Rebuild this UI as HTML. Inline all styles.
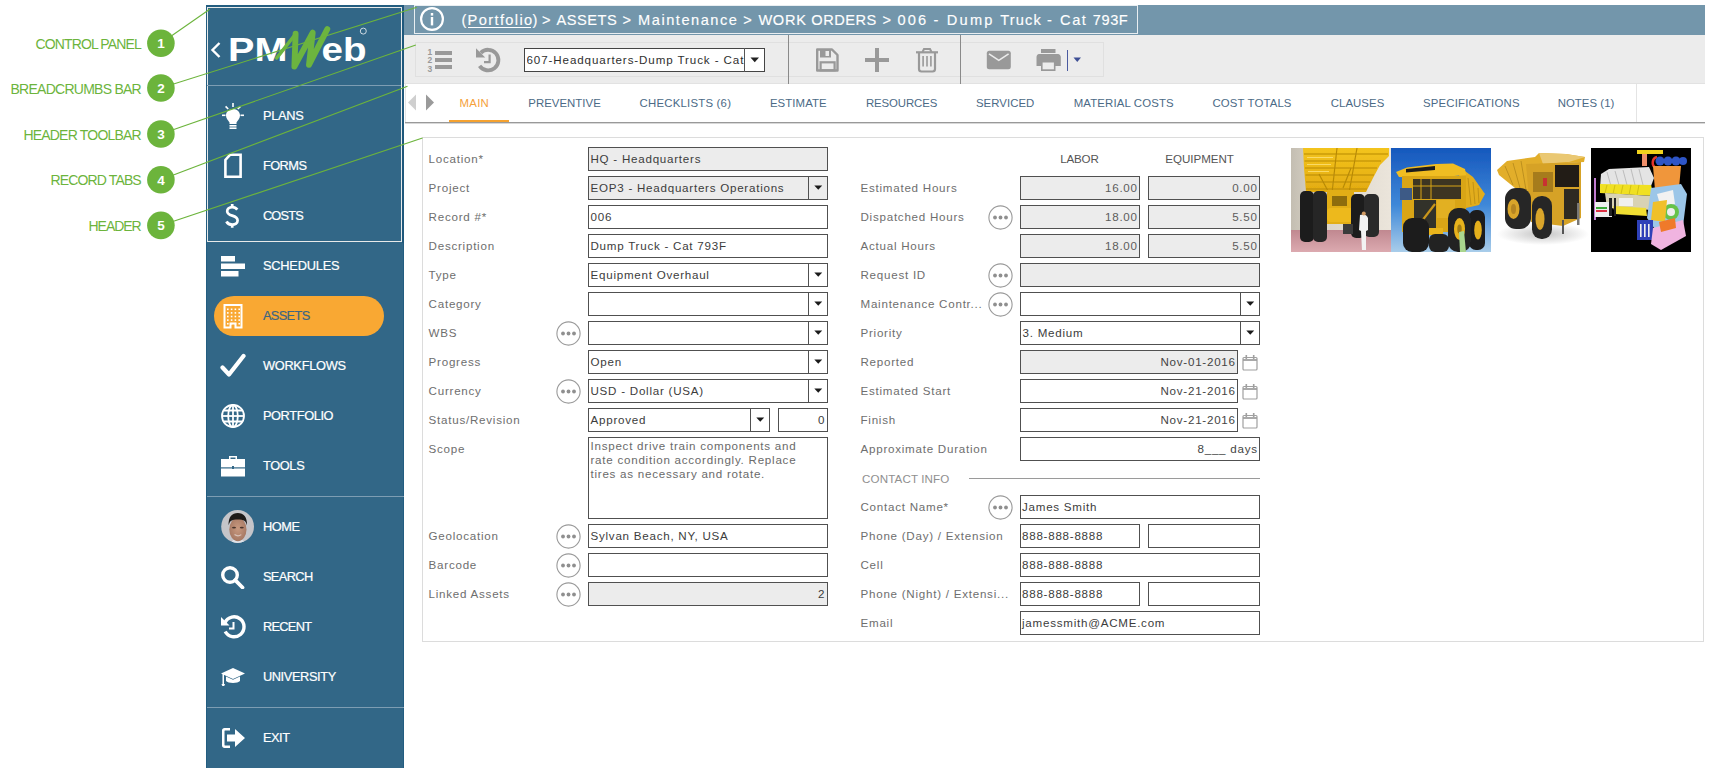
<!DOCTYPE html><html><head><meta charset="utf-8"><style>
html,body{margin:0;padding:0}
body{width:1709px;height:771px;position:relative;overflow:hidden;background:#fff;font-family:"Liberation Sans",sans-serif}
.t{position:absolute;white-space:nowrap;line-height:1}
svg{display:block}
</style></head><body>
<div style="position:absolute;left:206px;top:5px;width:198px;height:763px;background:#326787;"></div>
<div style="position:absolute;left:403px;top:5px;width:1px;height:763px;background:#235d80;"></div>
<div style="position:absolute;left:206px;top:5px;width:1px;height:763px;background:#235d80;"></div>
<div style="position:absolute;left:206px;top:5px;width:198px;height:2px;background:#235d80;"></div>
<div style="position:absolute;left:207px;top:7px;width:195px;height:235px;box-sizing:border-box;border:1px solid #e8eaea;"></div>
<div style="position:absolute;left:402px;top:5px;width:2px;height:238px;background:#1f587c;"></div>
<div style="position:absolute;left:207px;top:85px;width:194px;height:1px;background:#7d9db3;"></div>
<div style="position:absolute;left:207px;top:496px;width:197px;height:1px;background:#7d9db3;"></div>
<div style="position:absolute;left:207px;top:707px;width:197px;height:1px;background:#7d9db3;"></div>
<svg style="position:absolute;left:206px;top:25px;" width="198" height="50" viewBox="0 0 198 50">
<path d="M13.5 18 L6.5 25 L13.5 32" fill="none" stroke="#fff" stroke-width="2.4"/>
<text x="22" y="35.6" font-family="Liberation Sans" font-weight="bold" font-size="32.7" fill="#fff" textLength="59.4" lengthAdjust="spacingAndGlyphs">PM</text>
<text x="115.6" y="35.6" font-family="Liberation Sans" font-weight="bold" font-size="32.7" fill="#fff" textLength="45" lengthAdjust="spacingAndGlyphs">eb</text>
<path d="M70.7 33 L89.6 9" stroke="#6cb43f" stroke-width="3.6" stroke-linecap="round"/><polyline points="89.6,8.8 88.4,41.6 106.7,7.6 103,39.8 121.3,4.2" fill="none" stroke="#6cb43f" stroke-width="5.9" stroke-linejoin="round" stroke-linecap="round"/>
<circle cx="157.3" cy="6.1" r="3" fill="none" stroke="#dfe7ec" stroke-width="0.9"/>
</svg>
<div style="position:absolute;left:214px;top:296px;width:170px;height:40px;background:#f9a833;border-radius:20px;"></div>
<div class="t" style="left:262.90px;top:109.76px;font-size:12.8px;color:#fff;letter-spacing:-0.294px;-webkit-text-stroke:0.2px #fff;">PLANS</div>
<div class="t" style="left:262.90px;top:159.76px;font-size:12.8px;color:#fff;letter-spacing:-0.530px;-webkit-text-stroke:0.2px #fff;">FORMS</div>
<div class="t" style="left:262.90px;top:209.76px;font-size:12.8px;color:#fff;letter-spacing:-0.824px;-webkit-text-stroke:0.2px #fff;">COSTS</div>
<div class="t" style="left:262.90px;top:259.76px;font-size:12.8px;color:#fff;letter-spacing:-0.193px;-webkit-text-stroke:0.2px #fff;">SCHEDULES</div>
<div class="t" style="left:262.90px;top:309.66px;font-size:12.8px;color:#3c6583;letter-spacing:-0.641px;-webkit-text-stroke:0.2px #3c6583;">ASSETS</div>
<div class="t" style="left:262.90px;top:359.76px;font-size:12.8px;color:#fff;letter-spacing:-0.266px;-webkit-text-stroke:0.2px #fff;">WORKFLOWS</div>
<div class="t" style="left:262.90px;top:409.76px;font-size:12.8px;color:#fff;letter-spacing:-0.379px;-webkit-text-stroke:0.2px #fff;">PORTFOLIO</div>
<div class="t" style="left:262.90px;top:459.76px;font-size:12.8px;color:#fff;letter-spacing:-0.339px;-webkit-text-stroke:0.2px #fff;">TOOLS</div>
<div class="t" style="left:262.90px;top:520.76px;font-size:12.8px;color:#fff;letter-spacing:-0.400px;-webkit-text-stroke:0.2px #fff;">HOME</div>
<div class="t" style="left:262.90px;top:570.66px;font-size:12.8px;color:#fff;letter-spacing:-0.609px;-webkit-text-stroke:0.2px #fff;">SEARCH</div>
<div class="t" style="left:262.90px;top:620.66px;font-size:12.8px;color:#fff;letter-spacing:-0.685px;-webkit-text-stroke:0.2px #fff;">RECENT</div>
<div class="t" style="left:262.90px;top:670.66px;font-size:12.8px;color:#fff;letter-spacing:-0.390px;-webkit-text-stroke:0.2px #fff;">UNIVERSITY</div>
<div class="t" style="left:262.90px;top:731.66px;font-size:12.8px;color:#fff;letter-spacing:-0.450px;-webkit-text-stroke:0.2px #fff;">EXIT</div>
<svg style="position:absolute;left:220px;top:102px;" width="26" height="28" viewBox="0 0 26 28"><g fill="#fff"><path d="M13 7 C8.5 7 6 10.2 6 13.5 C6 16.5 8 18 9.5 20.5 L9.5 22 L16.5 22 L16.5 20.5 C18 18 20 16.5 20 13.5 C20 10.2 17.5 7 13 7Z"/>
<rect x="9.5" y="23" width="7" height="1.6"/><rect x="9.5" y="25.4" width="7" height="1.6"/>
<rect x="12.2" y="1" width="1.6" height="4"/><rect x="2" y="12.5" width="3.5" height="1.6"/><rect x="20.5" y="12.5" width="3.5" height="1.6"/>
<path d="M5 5 L6.2 3.8 L8.8 6.4 L7.6 7.6Z"/><path d="M21 5 L19.8 3.8 L17.2 6.4 L18.4 7.6Z"/></g></svg>
<svg style="position:absolute;left:222px;top:152px;" width="22" height="28" viewBox="0 0 22 28"><path d="M8 2.8 L18.6 2.8 L18.6 24.8 L3.4 24.8 L3.4 8 Z" fill="none" stroke="#fff" stroke-width="2.6" stroke-linejoin="miter"/></svg>
<svg style="position:absolute;left:222px;top:202px;" width="20" height="28" viewBox="0 0 20 28"><g fill="none" stroke="#fff" stroke-width="2.7"><path d="M15.3 7.6 C14 5.8 12.3 5.1 10.2 5.1 C7.2 5.1 5.2 6.9 5.2 9.2 C5.2 11.8 7.3 12.7 10.2 13.6 C13.2 14.5 15.6 15.6 15.6 18.6 C15.6 21.2 13.2 22.7 10.2 22.7 C7.6 22.7 5.5 21.6 4.4 19.5"/><path d="M10.2 2 V5.5 M10.2 22.3 V25.8"/></g></svg>
<svg style="position:absolute;left:220px;top:255px;" width="26" height="23" viewBox="0 0 26 23"><g fill="#fff"><rect x="1" y="1" width="14" height="5.5"/><rect x="1" y="8.5" width="24" height="5.5"/><rect x="1" y="16" width="17.5" height="5.5"/></g></svg>
<svg style="position:absolute;left:222px;top:303px;" width="22" height="27" viewBox="0 0 22 27"><g fill="#fff"><path d="M1.5 1 H20.5 V25.5 H12.5 V21.5 H9.5 V25.5 H1.5 Z M3.5 3 V23.5 H7.5 V19.5 H14.5 V23.5 H18.5 V3 Z"/>
<g><rect x="5.0" y="5.5" width="1.6" height="1.6"/><rect x="5.0" y="9.1" width="1.6" height="1.6"/><rect x="5.0" y="12.7" width="1.6" height="1.6"/><rect x="5.0" y="16.3" width="1.6" height="1.6"/><rect x="5.0" y="19.9" width="1.6" height="1.6"/><rect x="8.8" y="5.5" width="1.6" height="1.6"/><rect x="8.8" y="9.1" width="1.6" height="1.6"/><rect x="8.8" y="12.7" width="1.6" height="1.6"/><rect x="8.8" y="16.3" width="1.6" height="1.6"/><rect x="8.8" y="19.9" width="1.6" height="1.6"/><rect x="12.6" y="5.5" width="1.6" height="1.6"/><rect x="12.6" y="9.1" width="1.6" height="1.6"/><rect x="12.6" y="12.7" width="1.6" height="1.6"/><rect x="12.6" y="16.3" width="1.6" height="1.6"/><rect x="12.6" y="19.9" width="1.6" height="1.6"/><rect x="16.4" y="5.5" width="1.6" height="1.6"/><rect x="16.4" y="9.1" width="1.6" height="1.6"/><rect x="16.4" y="12.7" width="1.6" height="1.6"/><rect x="16.4" y="16.3" width="1.6" height="1.6"/><rect x="16.4" y="19.9" width="1.6" height="1.6"/></g></g></svg>
<svg style="position:absolute;left:220px;top:353px;" width="26" height="26" viewBox="0 0 26 26"><path d="M2.5 14.5 L9 21.5 L23.5 3" fill="none" stroke="#fff" stroke-width="4.2" stroke-linecap="round" stroke-linejoin="round"/></svg>
<svg style="position:absolute;left:220px;top:403px;" width="26" height="26" viewBox="0 0 26 26"><g fill="none" stroke="#fff" stroke-width="1.8"><circle cx="13" cy="13" r="11"/><ellipse cx="13" cy="13" rx="4.8" ry="11"/><line x1="13" y1="2" x2="13" y2="24"/><line x1="2" y1="13" x2="24" y2="13"/><path d="M4 7.5 H22 M4 18.5 H22"/></g></svg>
<svg style="position:absolute;left:220px;top:454px;" width="26" height="24" viewBox="0 0 26 24"><g fill="#fff"><path d="M9 2 H17 V5 H15.5 V3.5 H10.5 V5 H9 Z"/><rect x="1" y="5" width="24" height="8.3"/><rect x="1" y="14.5" width="24" height="8"/><rect x="12" y="12" width="2" height="3" fill="#326787"/></g></svg>
<svg style="position:absolute;left:221px;top:510px;" width="33" height="34" viewBox="0 0 33 34"><defs><clipPath id="avc"><circle cx="16.6" cy="16.5" r="16.4"/></clipPath><radialGradient id="avf" cx="50%" cy="45%" r="60%"><stop offset="0" stop-color="#c99a80"/><stop offset="1" stop-color="#a27560"/></radialGradient></defs>
<g clip-path="url(#avc)"><rect width="33" height="34" fill="#c5c5c9"/>
<path d="M10 34 C11 30 13 29 16.8 29 C20.5 29 23 30 24 34 Z" fill="#dfe3ea"/>
<ellipse cx="16.9" cy="19.5" rx="8.6" ry="11.8" fill="url(#avf)"/>
<path d="M7.6 15.5 C7.2 7 11 3 16.8 3 C22.6 3 26.4 7 26 15.5 C25 11 23 9.5 16.8 9.5 C10.6 9.5 8.6 11 7.6 15.5Z" fill="#1e1a18"/>
<g fill="#4a352c"><ellipse cx="13" cy="17.6" rx="2" ry="0.9"/><ellipse cx="20.8" cy="17.6" rx="2" ry="0.9"/></g>
<path d="M13.5 24.6 C15.5 26 18.5 26 20.3 24.6" stroke="#d9c2b8" stroke-width="1.2" fill="none"/></g></svg>
<svg style="position:absolute;left:220px;top:565px;" width="26" height="24" viewBox="0 0 26 24"><circle cx="10" cy="10" r="7.3" fill="none" stroke="#fff" stroke-width="3.4"/><path d="M15.2 15.2 L22.5 22.5" stroke="#fff" stroke-width="3.8" stroke-linecap="round"/></svg>
<svg style="position:absolute;left:220px;top:614px;" width="26" height="26" viewBox="0 0 26 26"><g fill="none" stroke="#fff" stroke-width="3.4"><path d="M5.2 17.5 A10 10 0 1 0 5 8.5"/></g><path d="M1 3 L1 11.5 L9.5 11.5 Z" fill="#fff"/><path d="M13.5 8 V14.5 H9" fill="none" stroke="#fff" stroke-width="2"/></svg>
<svg style="position:absolute;left:220px;top:667px;" width="26" height="20" viewBox="0 0 26 20"><g fill="#fff"><path d="M13 1 L25 6.5 L13 12 L1 6.5 Z"/><path d="M6 9.5 V14 C8 16.5 18 16.5 20 14 V9.5 L13 12.8 Z"/><rect x="2.5" y="7" width="1.5" height="10"/><path d="M1.5 17 L5 17 L4.2 19 L2.3 19Z"/></g></svg>
<svg style="position:absolute;left:220px;top:727px;" width="26" height="22" viewBox="0 0 26 22"><g fill="#fff"><path d="M2 3.5 C2 2 3 1 4.5 1 H10 V3.5 H5 C4.6 3.5 4.5 3.7 4.5 4 V18 C4.5 18.3 4.6 18.5 5 18.5 H10 V21 H4.5 C3 21 2 20 2 18.5 Z"/><path d="M7 7.5 H15 V2 L25 11 L15 20 V14.5 H7 Z"/></g></svg>
<div class="t" style="left:35.60px;top:37.24px;font-size:14.0px;color:#6cb43c;letter-spacing:-0.883px;">CONTROL PANEL</div>
<div class="t" style="left:10.50px;top:81.94px;font-size:14.0px;color:#6cb43c;letter-spacing:-0.741px;">BREADCRUMBS BAR</div>
<div class="t" style="left:23.40px;top:128.04px;font-size:14.0px;color:#6cb43c;letter-spacing:-0.795px;">HEADER TOOLBAR</div>
<div class="t" style="left:50.60px;top:172.84px;font-size:14.0px;color:#6cb43c;letter-spacing:-0.873px;">RECORD TABS</div>
<div class="t" style="left:88.50px;top:219.04px;font-size:14.0px;color:#6cb43c;letter-spacing:-1.029px;">HEADER</div>
<!--MAIN-->
<div style="position:absolute;left:404px;top:5px;width:1301px;height:30px;background:#7396ab;"></div>
<div style="position:absolute;left:414px;top:5px;width:724px;height:29px;box-sizing:border-box;border:1px solid #e9eef1;"></div>
<svg style="position:absolute;left:418.5px;top:6px;" width="26" height="26" viewBox="0 0 26 26"><circle cx="13" cy="13" r="10.9" fill="none" stroke="#fff" stroke-width="2.2"/><rect x="11.8" y="7" width="2.4" height="2.6" fill="#fff"/><rect x="11.8" y="11" width="2.4" height="8.4" fill="#fff"/></svg>
<div class="t" style="left:461.60px;top:12.63px;font-size:14.6px;color:#fff;letter-spacing:0.000px;-webkit-text-stroke:0.15px #fff;">(</div>
<div class="t" style="left:467.60px;top:12.63px;font-size:14.6px;color:#fff;letter-spacing:1.380px;-webkit-text-stroke:0.15px #fff;">Portfolio</div>
<div class="t" style="left:532.40px;top:12.63px;font-size:14.6px;color:#fff;letter-spacing:0.000px;-webkit-text-stroke:0.15px #fff;">)</div>
<div class="t" style="left:541.90px;top:12.63px;font-size:14.6px;color:#fff;letter-spacing:0.000px;-webkit-text-stroke:0.15px #fff;">&gt;</div>
<div class="t" style="left:556.50px;top:12.63px;font-size:14.6px;color:#fff;letter-spacing:0.518px;-webkit-text-stroke:0.15px #fff;">ASSETS</div>
<div class="t" style="left:622.50px;top:12.63px;font-size:14.6px;color:#fff;letter-spacing:0.000px;-webkit-text-stroke:0.15px #fff;">&gt;</div>
<div class="t" style="left:638.10px;top:12.63px;font-size:14.6px;color:#fff;letter-spacing:1.530px;-webkit-text-stroke:0.15px #fff;">Maintenance</div>
<div class="t" style="left:743.30px;top:12.63px;font-size:14.6px;color:#fff;letter-spacing:0.000px;-webkit-text-stroke:0.15px #fff;">&gt;</div>
<div class="t" style="left:758.40px;top:12.63px;font-size:14.6px;color:#fff;letter-spacing:0.694px;-webkit-text-stroke:0.15px #fff;">WORK</div>
<div class="t" style="left:811.30px;top:12.63px;font-size:14.6px;color:#fff;letter-spacing:0.487px;-webkit-text-stroke:0.15px #fff;">ORDERS</div>
<div class="t" style="left:882.40px;top:12.63px;font-size:14.6px;color:#fff;letter-spacing:0.000px;-webkit-text-stroke:0.15px #fff;">&gt;</div>
<div class="t" style="left:897.60px;top:12.63px;font-size:14.6px;color:#fff;letter-spacing:2.120px;-webkit-text-stroke:0.15px #fff;">006</div>
<div class="t" style="left:933.50px;top:12.63px;font-size:14.6px;color:#fff;letter-spacing:0.000px;-webkit-text-stroke:0.15px #fff;">-</div>
<div class="t" style="left:946.80px;top:12.63px;font-size:14.6px;color:#fff;letter-spacing:2.252px;-webkit-text-stroke:0.15px #fff;">Dump</div>
<div class="t" style="left:1000.30px;top:12.63px;font-size:14.6px;color:#fff;letter-spacing:1.110px;-webkit-text-stroke:0.15px #fff;">Truck</div>
<div class="t" style="left:1047.00px;top:12.63px;font-size:14.6px;color:#fff;letter-spacing:0.000px;-webkit-text-stroke:0.15px #fff;">-</div>
<div class="t" style="left:1060.00px;top:12.63px;font-size:14.6px;color:#fff;letter-spacing:1.590px;-webkit-text-stroke:0.15px #fff;">Cat</div>
<div class="t" style="left:1092.80px;top:12.63px;font-size:14.6px;color:#fff;letter-spacing:0.574px;-webkit-text-stroke:0.15px #fff;">793F</div>
<div style="position:absolute;left:468px;top:26.5px;width:63px;height:1.1000000000000014px;background:#fff;"></div>
<div style="position:absolute;left:404px;top:35px;width:1301px;height:49px;background:#ececec;"></div>
<div style="position:absolute;left:404px;top:83px;width:1301px;height:1px;background:#e2e2e2;"></div>
<div style="position:absolute;left:415px;top:42px;width:689px;height:35px;box-sizing:border-box;border:1px solid #e0e0e0;"></div>
<div style="position:absolute;left:788px;top:35px;width:1px;height:49px;background:#8a8a8a;"></div>
<div style="position:absolute;left:960px;top:35px;width:1px;height:49px;background:#8a8a8a;"></div>
<svg style="position:absolute;left:426px;top:46px;" width="28" height="28" viewBox="0 0 28 28"><g fill="#999"><rect x="9" y="5" width="17" height="4"/><rect x="9" y="12" width="17" height="4"/><rect x="9" y="19" width="17" height="4"/></g>
<g font-family="Liberation Sans" font-weight="bold" font-size="8.5" fill="#999"><text x="1.6" y="9">1</text><text x="1.6" y="17">2</text><text x="1.6" y="25.5">3</text></g></svg>
<svg style="position:absolute;left:474px;top:46px;" width="28" height="28" viewBox="0 0 28 28"><path d="M6.8 6.8 A10.3 10.3 0 1 1 5.6 19.9" fill="none" stroke="#999" stroke-width="3.8"/><path d="M2 2.3 L2 11.6 L11.2 11.6 Z" fill="#999"/><path d="M15.6 8.5 V16.1 H10" fill="none" stroke="#999" stroke-width="2.2"/></svg>
<div style="position:absolute;left:524px;top:48px;width:241px;height:24px;box-sizing:border-box;border:1px solid #444;background:#fff;"></div>
<div style="position:absolute;left:744px;top:48px;width:1px;height:24px;background:#555;"></div>
<svg style="position:absolute;left:750px;top:57px;" width="10" height="6" viewBox="0 0 10 6"><path d="M0.5 0.5 H9 L4.75 5.2 Z" fill="#222"/></svg>
<div class="t" style="left:526.50px;top:53.97px;font-size:11.6px;color:#2f2f2f;letter-spacing:0.898px;overflow:hidden;width:218px;">607-Headquarters-Dump Truck - Cat</div>
<svg style="position:absolute;left:814px;top:47px;" width="26" height="26" viewBox="0 0 26 26"><path d="M3.2 2.5 H18 L23.5 8 V23.5 H3.2 Z" fill="none" stroke="#999" stroke-width="2.4" stroke-linejoin="round"/><rect x="6" y="3" width="11" height="7.5" fill="#999"/><rect x="11.5" y="4" width="3.5" height="5" fill="#ececec"/><rect x="6.6" y="15.3" width="14" height="8" fill="none" stroke="#999" stroke-width="2.2"/></svg>
<svg style="position:absolute;left:864px;top:47px;" width="26" height="26" viewBox="0 0 26 26"><rect x="11" y="1" width="4" height="24" fill="#999"/><rect x="1" y="11" width="24" height="4" fill="#999"/></svg>
<svg style="position:absolute;left:914px;top:47px;" width="26" height="26" viewBox="0 0 26 26"><path d="M5 6 V22 C5 23.5 6 24.5 7.5 24.5 H18.5 C20 24.5 21 23.5 21 22 V6" fill="none" stroke="#999" stroke-width="2.2"/><rect x="2" y="4.2" width="22" height="2.2" fill="#999"/><path d="M8.5 5 L10 2 H16 L17.5 5" fill="none" stroke="#999" stroke-width="2"/><rect x="8.3" y="9" width="1.6" height="10.5" fill="#999"/><rect x="12.2" y="9" width="1.6" height="10.5" fill="#999"/><rect x="16.1" y="9" width="1.6" height="10.5" fill="#999"/></svg>
<svg style="position:absolute;left:986px;top:50px;" width="26" height="20" viewBox="0 0 26 20"><rect x="0.8" y="0.8" width="24" height="18.4" rx="2.5" fill="#999"/><path d="M3 3.8 L12.8 10.3 L22.6 3.8" fill="none" stroke="#ececec" stroke-width="1.6"/></svg>
<svg style="position:absolute;left:1036px;top:48px;" width="27" height="24" viewBox="0 0 27 24"><rect x="5" y="1" width="14.5" height="4" fill="#999"/><path d="M3 6 H22 C23.5 6 24.8 7.5 24.8 9 V18 H0.5 V9 C0.5 7.5 1.5 6 3 6Z" fill="#999"/><rect x="5" y="13" width="14.5" height="10" fill="#999"/><rect x="6.6" y="14.5" width="11.3" height="6.8" fill="#ececec"/></svg>
<div style="position:absolute;left:1067px;top:50px;width:1px;height:21px;background:#4a5aa0;"></div>
<svg style="position:absolute;left:1073px;top:57px;" width="9" height="6" viewBox="0 0 9 6"><path d="M0.5 0.5 H8 L4.25 5 Z" fill="#3e4f95"/></svg>
<div style="position:absolute;left:405px;top:84px;width:1232px;height:40px;box-sizing:border-box;border:1px solid #e4e4e4;border-top:none;"></div>
<div style="position:absolute;left:405px;top:122px;width:1300px;height:1px;background:#999;"></div>
<div style="position:absolute;left:405px;top:123px;width:1300px;height:1px;background:#d8d8d8;"></div>
<div style="position:absolute;left:449px;top:120px;width:60px;height:2px;background:#f5a230;"></div>
<svg style="position:absolute;left:406px;top:94px;" width="32" height="18" viewBox="0 0 32 18"><path d="M2 8.5 L10 0.5 V16.5 Z" fill="#cfcfcf"/><path d="M28 8.5 L20 0.5 V16.5 Z" fill="#9a9a9a"/></svg>
<div class="t" style="left:459.60px;top:97.54px;font-size:11.4px;color:#f5a13a;letter-spacing:0.233px;">MAIN</div>
<div class="t" style="left:528.30px;top:97.54px;font-size:11.4px;color:#4b6a86;letter-spacing:0.031px;">PREVENTIVE</div>
<div class="t" style="left:639.60px;top:97.54px;font-size:11.4px;color:#4b6a86;letter-spacing:0.209px;">CHECKLISTS (6)</div>
<div class="t" style="left:769.90px;top:97.54px;font-size:11.4px;color:#4b6a86;letter-spacing:0.091px;">ESTIMATE</div>
<div class="t" style="left:866.00px;top:97.54px;font-size:11.4px;color:#4b6a86;letter-spacing:-0.114px;">RESOURCES</div>
<div class="t" style="left:975.90px;top:97.54px;font-size:11.4px;color:#4b6a86;letter-spacing:0.061px;">SERVICED</div>
<div class="t" style="left:1073.70px;top:97.54px;font-size:11.4px;color:#4b6a86;letter-spacing:0.140px;">MATERIAL COSTS</div>
<div class="t" style="left:1212.50px;top:97.54px;font-size:11.4px;color:#4b6a86;letter-spacing:0.129px;">COST TOTALS</div>
<div class="t" style="left:1330.80px;top:97.54px;font-size:11.4px;color:#4b6a86;letter-spacing:0.047px;">CLAUSES</div>
<div class="t" style="left:1423.00px;top:97.54px;font-size:11.4px;color:#4b6a86;letter-spacing:0.187px;">SPECIFICATIONS</div>
<div class="t" style="left:1557.70px;top:97.54px;font-size:11.4px;color:#4b6a86;letter-spacing:0.041px;">NOTES (1)</div>
<!--FORM-->
<div style="position:absolute;left:422px;top:137px;width:1282px;height:505px;box-sizing:border-box;border:1px solid #dcdcdc;"></div>
<div class="t" style="left:428.60px;top:153.17px;font-size:11.6px;color:#6e6e6e;letter-spacing:0.750px;">Location*</div>
<div style="position:absolute;left:588px;top:147px;width:240px;height:24px;box-sizing:border-box;border:1px solid #505050;background:#ececec;"></div>
<div class="t" style="left:590.50px;top:153.17px;font-size:11.6px;color:#3c3c3c;letter-spacing:0.750px;">HQ - Headquarters</div>
<div class="t" style="left:428.60px;top:182.17px;font-size:11.6px;color:#6e6e6e;letter-spacing:0.750px;">Project</div>
<div style="position:absolute;left:588px;top:176px;width:240px;height:24px;box-sizing:border-box;border:1px solid #505050;background:#ececec;"></div>
<div style="position:absolute;left:808px;top:176px;width:1px;height:24px;background:#505050;"></div>
<svg style="position:absolute;left:814px;top:185px;" width="9" height="6" viewBox="0 0 9 6"><path d="M0.3 0.5 H8.2 L4.25 4.8 Z" fill="#1a1a1a"/></svg>
<div class="t" style="left:590.50px;top:182.17px;font-size:11.6px;color:#3c3c3c;letter-spacing:0.750px;">EOP3 - Headquarters Operations</div>
<div class="t" style="left:428.60px;top:211.17px;font-size:11.6px;color:#6e6e6e;letter-spacing:0.750px;">Record #*</div>
<div style="position:absolute;left:588px;top:205px;width:240px;height:24px;box-sizing:border-box;border:1px solid #505050;background:#fff;"></div>
<div class="t" style="left:590.50px;top:211.17px;font-size:11.6px;color:#3c3c3c;letter-spacing:0.750px;">006</div>
<div class="t" style="left:428.60px;top:240.17px;font-size:11.6px;color:#6e6e6e;letter-spacing:0.750px;">Description</div>
<div style="position:absolute;left:588px;top:234px;width:240px;height:24px;box-sizing:border-box;border:1px solid #505050;background:#fff;"></div>
<div class="t" style="left:590.50px;top:240.17px;font-size:11.6px;color:#3c3c3c;letter-spacing:0.750px;">Dump Truck - Cat 793F</div>
<div class="t" style="left:428.60px;top:269.17px;font-size:11.6px;color:#6e6e6e;letter-spacing:0.750px;">Type</div>
<div style="position:absolute;left:588px;top:263px;width:240px;height:24px;box-sizing:border-box;border:1px solid #505050;background:#fff;"></div>
<div style="position:absolute;left:808px;top:263px;width:1px;height:24px;background:#505050;"></div>
<svg style="position:absolute;left:814px;top:272px;" width="9" height="6" viewBox="0 0 9 6"><path d="M0.3 0.5 H8.2 L4.25 4.8 Z" fill="#1a1a1a"/></svg>
<div class="t" style="left:590.50px;top:269.17px;font-size:11.6px;color:#3c3c3c;letter-spacing:0.750px;">Equipment Overhaul</div>
<div class="t" style="left:428.60px;top:298.17px;font-size:11.6px;color:#6e6e6e;letter-spacing:0.750px;">Category</div>
<div style="position:absolute;left:588px;top:292px;width:240px;height:24px;box-sizing:border-box;border:1px solid #505050;background:#fff;"></div>
<div style="position:absolute;left:808px;top:292px;width:1px;height:24px;background:#505050;"></div>
<svg style="position:absolute;left:814px;top:301px;" width="9" height="6" viewBox="0 0 9 6"><path d="M0.3 0.5 H8.2 L4.25 4.8 Z" fill="#1a1a1a"/></svg>
<div class="t" style="left:428.60px;top:327.17px;font-size:11.6px;color:#6e6e6e;letter-spacing:0.750px;">WBS</div>
<div style="position:absolute;left:588px;top:321px;width:240px;height:24px;box-sizing:border-box;border:1px solid #505050;background:#fff;"></div>
<div style="position:absolute;left:808px;top:321px;width:1px;height:24px;background:#505050;"></div>
<svg style="position:absolute;left:814px;top:330px;" width="9" height="6" viewBox="0 0 9 6"><path d="M0.3 0.5 H8.2 L4.25 4.8 Z" fill="#1a1a1a"/></svg>
<svg style="position:absolute;left:555.5px;top:320.5px;" width="25" height="25" viewBox="0 0 25 25"><circle cx="12.5" cy="12.5" r="11.6" fill="#fff" stroke="#9a9a9a" stroke-width="1.1"/><g fill="#8f8f8f"><circle cx="7" cy="12.5" r="1.9"/><circle cx="12.5" cy="12.5" r="1.9"/><circle cx="18" cy="12.5" r="1.9"/></g></svg>
<div class="t" style="left:428.60px;top:356.17px;font-size:11.6px;color:#6e6e6e;letter-spacing:0.750px;">Progress</div>
<div style="position:absolute;left:588px;top:350px;width:240px;height:24px;box-sizing:border-box;border:1px solid #505050;background:#fff;"></div>
<div style="position:absolute;left:808px;top:350px;width:1px;height:24px;background:#505050;"></div>
<svg style="position:absolute;left:814px;top:359px;" width="9" height="6" viewBox="0 0 9 6"><path d="M0.3 0.5 H8.2 L4.25 4.8 Z" fill="#1a1a1a"/></svg>
<div class="t" style="left:590.50px;top:356.17px;font-size:11.6px;color:#3c3c3c;letter-spacing:0.750px;">Open</div>
<div class="t" style="left:428.60px;top:385.17px;font-size:11.6px;color:#6e6e6e;letter-spacing:0.750px;">Currency</div>
<div style="position:absolute;left:588px;top:379px;width:240px;height:24px;box-sizing:border-box;border:1px solid #505050;background:#fff;"></div>
<div style="position:absolute;left:808px;top:379px;width:1px;height:24px;background:#505050;"></div>
<svg style="position:absolute;left:814px;top:388px;" width="9" height="6" viewBox="0 0 9 6"><path d="M0.3 0.5 H8.2 L4.25 4.8 Z" fill="#1a1a1a"/></svg>
<svg style="position:absolute;left:555.5px;top:378.5px;" width="25" height="25" viewBox="0 0 25 25"><circle cx="12.5" cy="12.5" r="11.6" fill="#fff" stroke="#9a9a9a" stroke-width="1.1"/><g fill="#8f8f8f"><circle cx="7" cy="12.5" r="1.9"/><circle cx="12.5" cy="12.5" r="1.9"/><circle cx="18" cy="12.5" r="1.9"/></g></svg>
<div class="t" style="left:590.50px;top:385.17px;font-size:11.6px;color:#3c3c3c;letter-spacing:0.750px;">USD - Dollar (USA)</div>
<div class="t" style="left:428.60px;top:414.17px;font-size:11.6px;color:#6e6e6e;letter-spacing:0.750px;">Status/Revision</div>
<div style="position:absolute;left:588px;top:408px;width:182px;height:24px;box-sizing:border-box;border:1px solid #505050;background:#fff;"></div>
<div style="position:absolute;left:750px;top:408px;width:1px;height:24px;background:#505050;"></div>
<svg style="position:absolute;left:756px;top:417px;" width="9" height="6" viewBox="0 0 9 6"><path d="M0.3 0.5 H8.2 L4.25 4.8 Z" fill="#1a1a1a"/></svg>
<div class="t" style="left:590.50px;top:414.17px;font-size:11.6px;color:#3c3c3c;letter-spacing:0.750px;">Approved</div>
<div style="position:absolute;left:778px;top:408px;width:50px;height:24px;box-sizing:border-box;border:1px solid #505050;background:#fff;"></div>
<div class="t" style="right:884.50px;top:414.17px;font-size:11.6px;color:#3c3c3c;letter-spacing:0.000px;">0</div>
<div class="t" style="left:428.60px;top:443.17px;font-size:11.6px;color:#6e6e6e;letter-spacing:0.750px;">Scope</div>
<div style="position:absolute;left:588px;top:437px;width:240px;height:82px;box-sizing:border-box;border:1px solid #505050;background:#fff;"></div>
<div class="t" style="left:590.50px;top:440.17px;font-size:11.6px;color:#6a6a6a;letter-spacing:0.750px;">Inspect drive train components and</div>
<div class="t" style="left:590.50px;top:454.17px;font-size:11.6px;color:#6a6a6a;letter-spacing:0.750px;">rate condition accordingly. Replace</div>
<div class="t" style="left:590.50px;top:468.17px;font-size:11.6px;color:#6a6a6a;letter-spacing:0.750px;">tires as necessary and rotate.</div>
<div class="t" style="left:428.60px;top:530.17px;font-size:11.6px;color:#6e6e6e;letter-spacing:0.750px;">Geolocation</div>
<div style="position:absolute;left:588px;top:524px;width:240px;height:24px;box-sizing:border-box;border:1px solid #505050;background:#fff;"></div>
<svg style="position:absolute;left:555.5px;top:523.5px;" width="25" height="25" viewBox="0 0 25 25"><circle cx="12.5" cy="12.5" r="11.6" fill="#fff" stroke="#9a9a9a" stroke-width="1.1"/><g fill="#8f8f8f"><circle cx="7" cy="12.5" r="1.9"/><circle cx="12.5" cy="12.5" r="1.9"/><circle cx="18" cy="12.5" r="1.9"/></g></svg>
<div class="t" style="left:590.50px;top:530.17px;font-size:11.6px;color:#3c3c3c;letter-spacing:0.750px;">Sylvan Beach, NY, USA</div>
<div class="t" style="left:428.60px;top:559.17px;font-size:11.6px;color:#6e6e6e;letter-spacing:0.750px;">Barcode</div>
<div style="position:absolute;left:588px;top:553px;width:240px;height:24px;box-sizing:border-box;border:1px solid #505050;background:#fff;"></div>
<svg style="position:absolute;left:555.5px;top:552.5px;" width="25" height="25" viewBox="0 0 25 25"><circle cx="12.5" cy="12.5" r="11.6" fill="#fff" stroke="#9a9a9a" stroke-width="1.1"/><g fill="#8f8f8f"><circle cx="7" cy="12.5" r="1.9"/><circle cx="12.5" cy="12.5" r="1.9"/><circle cx="18" cy="12.5" r="1.9"/></g></svg>
<div class="t" style="left:428.60px;top:588.17px;font-size:11.6px;color:#6e6e6e;letter-spacing:0.750px;">Linked Assets</div>
<div style="position:absolute;left:588px;top:582px;width:240px;height:24px;box-sizing:border-box;border:1px solid #505050;background:#ececec;"></div>
<svg style="position:absolute;left:555.5px;top:581.5px;" width="25" height="25" viewBox="0 0 25 25"><circle cx="12.5" cy="12.5" r="11.6" fill="#fff" stroke="#9a9a9a" stroke-width="1.1"/><g fill="#8f8f8f"><circle cx="7" cy="12.5" r="1.9"/><circle cx="12.5" cy="12.5" r="1.9"/><circle cx="18" cy="12.5" r="1.9"/></g></svg>
<div class="t" style="right:884.50px;top:588.17px;font-size:11.6px;color:#3c3c3c;letter-spacing:0.000px;">2</div>
<div class="t" style="left:1060.30px;top:153.37px;font-size:11.6px;color:#555;letter-spacing:-0.206px;">LABOR</div>
<div class="t" style="left:1165.30px;top:153.37px;font-size:11.6px;color:#555;letter-spacing:-0.033px;">EQUIPMENT</div>
<div class="t" style="left:860.50px;top:182.17px;font-size:11.6px;color:#6e6e6e;letter-spacing:0.750px;">Estimated Hours</div>
<div style="position:absolute;left:1020px;top:176px;width:120px;height:24px;box-sizing:border-box;border:1px solid #505050;background:#ececec;"></div>
<div style="position:absolute;left:1148px;top:176px;width:112px;height:24px;box-sizing:border-box;border:1px solid #505050;background:#ececec;"></div>
<div class="t" style="right:571.25px;top:182.17px;font-size:11.6px;color:#5c5c5c;letter-spacing:0.750px;">16.00</div>
<div class="t" style="right:451.25px;top:182.17px;font-size:11.6px;color:#5c5c5c;letter-spacing:0.750px;">0.00</div>
<div class="t" style="left:860.50px;top:211.17px;font-size:11.6px;color:#6e6e6e;letter-spacing:0.750px;">Dispatched Hours</div>
<div style="position:absolute;left:1020px;top:205px;width:120px;height:24px;box-sizing:border-box;border:1px solid #505050;background:#ececec;"></div>
<div style="position:absolute;left:1148px;top:205px;width:112px;height:24px;box-sizing:border-box;border:1px solid #505050;background:#ececec;"></div>
<div class="t" style="right:571.25px;top:211.17px;font-size:11.6px;color:#5c5c5c;letter-spacing:0.750px;">18.00</div>
<div class="t" style="right:451.25px;top:211.17px;font-size:11.6px;color:#5c5c5c;letter-spacing:0.750px;">5.50</div>
<svg style="position:absolute;left:987.5px;top:204.5px;" width="25" height="25" viewBox="0 0 25 25"><circle cx="12.5" cy="12.5" r="11.6" fill="#fff" stroke="#9a9a9a" stroke-width="1.1"/><g fill="#8f8f8f"><circle cx="7" cy="12.5" r="1.9"/><circle cx="12.5" cy="12.5" r="1.9"/><circle cx="18" cy="12.5" r="1.9"/></g></svg>
<div class="t" style="left:860.50px;top:240.17px;font-size:11.6px;color:#6e6e6e;letter-spacing:0.750px;">Actual Hours</div>
<div style="position:absolute;left:1020px;top:234px;width:120px;height:24px;box-sizing:border-box;border:1px solid #505050;background:#ececec;"></div>
<div style="position:absolute;left:1148px;top:234px;width:112px;height:24px;box-sizing:border-box;border:1px solid #505050;background:#ececec;"></div>
<div class="t" style="right:571.25px;top:240.17px;font-size:11.6px;color:#5c5c5c;letter-spacing:0.750px;">18.00</div>
<div class="t" style="right:451.25px;top:240.17px;font-size:11.6px;color:#5c5c5c;letter-spacing:0.750px;">5.50</div>
<div class="t" style="left:860.50px;top:269.17px;font-size:11.6px;color:#6e6e6e;letter-spacing:0.750px;">Request ID</div>
<div style="position:absolute;left:1020px;top:263px;width:240px;height:24px;box-sizing:border-box;border:1px solid #505050;background:#ececec;"></div>
<svg style="position:absolute;left:987.5px;top:262.5px;" width="25" height="25" viewBox="0 0 25 25"><circle cx="12.5" cy="12.5" r="11.6" fill="#fff" stroke="#9a9a9a" stroke-width="1.1"/><g fill="#8f8f8f"><circle cx="7" cy="12.5" r="1.9"/><circle cx="12.5" cy="12.5" r="1.9"/><circle cx="18" cy="12.5" r="1.9"/></g></svg>
<div class="t" style="left:860.50px;top:298.17px;font-size:11.6px;color:#6e6e6e;letter-spacing:0.750px;">Maintenance Contr...</div>
<div style="position:absolute;left:1020px;top:292px;width:240px;height:24px;box-sizing:border-box;border:1px solid #505050;background:#fff;"></div>
<div style="position:absolute;left:1240px;top:292px;width:1px;height:24px;background:#505050;"></div>
<svg style="position:absolute;left:1246px;top:301px;" width="9" height="6" viewBox="0 0 9 6"><path d="M0.3 0.5 H8.2 L4.25 4.8 Z" fill="#1a1a1a"/></svg>
<svg style="position:absolute;left:987.5px;top:291.5px;" width="25" height="25" viewBox="0 0 25 25"><circle cx="12.5" cy="12.5" r="11.6" fill="#fff" stroke="#9a9a9a" stroke-width="1.1"/><g fill="#8f8f8f"><circle cx="7" cy="12.5" r="1.9"/><circle cx="12.5" cy="12.5" r="1.9"/><circle cx="18" cy="12.5" r="1.9"/></g></svg>
<div class="t" style="left:860.50px;top:327.17px;font-size:11.6px;color:#6e6e6e;letter-spacing:0.750px;">Priority</div>
<div style="position:absolute;left:1020px;top:321px;width:240px;height:24px;box-sizing:border-box;border:1px solid #505050;background:#fff;"></div>
<div style="position:absolute;left:1240px;top:321px;width:1px;height:24px;background:#505050;"></div>
<svg style="position:absolute;left:1246px;top:330px;" width="9" height="6" viewBox="0 0 9 6"><path d="M0.3 0.5 H8.2 L4.25 4.8 Z" fill="#1a1a1a"/></svg>
<div class="t" style="left:1022.50px;top:327.17px;font-size:11.6px;color:#3c3c3c;letter-spacing:0.750px;">3. Medium</div>
<div class="t" style="left:860.50px;top:356.17px;font-size:11.6px;color:#6e6e6e;letter-spacing:0.750px;">Reported</div>
<div style="position:absolute;left:1020px;top:350px;width:218px;height:24px;box-sizing:border-box;border:1px solid #505050;background:#ececec;"></div>
<div class="t" style="right:473.25px;top:356.17px;font-size:11.6px;color:#444;letter-spacing:0.750px;">Nov-01-2016</div>
<svg style="position:absolute;left:1242px;top:354px;" width="16" height="17" viewBox="0 0 16 17"><g fill="none" stroke="#a0a0a0" stroke-width="1.2"><rect x="1" y="3.5" width="14" height="12.5" rx="1"/><line x1="1" y1="6" x2="15" y2="6" stroke-width="1.8"/></g><g fill="#a0a0a0"><rect x="3.5" y="1" width="1.6" height="4"/><rect x="10.9" y="1" width="1.6" height="4"/></g></svg>
<div class="t" style="left:860.50px;top:385.17px;font-size:11.6px;color:#6e6e6e;letter-spacing:0.750px;">Estimated Start</div>
<div style="position:absolute;left:1020px;top:379px;width:218px;height:24px;box-sizing:border-box;border:1px solid #505050;background:#fff;"></div>
<div class="t" style="right:473.25px;top:385.17px;font-size:11.6px;color:#444;letter-spacing:0.750px;">Nov-21-2016</div>
<svg style="position:absolute;left:1242px;top:383px;" width="16" height="17" viewBox="0 0 16 17"><g fill="none" stroke="#a0a0a0" stroke-width="1.2"><rect x="1" y="3.5" width="14" height="12.5" rx="1"/><line x1="1" y1="6" x2="15" y2="6" stroke-width="1.8"/></g><g fill="#a0a0a0"><rect x="3.5" y="1" width="1.6" height="4"/><rect x="10.9" y="1" width="1.6" height="4"/></g></svg>
<div class="t" style="left:860.50px;top:414.17px;font-size:11.6px;color:#6e6e6e;letter-spacing:0.750px;">Finish</div>
<div style="position:absolute;left:1020px;top:408px;width:218px;height:24px;box-sizing:border-box;border:1px solid #505050;background:#fff;"></div>
<div class="t" style="right:473.25px;top:414.17px;font-size:11.6px;color:#444;letter-spacing:0.750px;">Nov-21-2016</div>
<svg style="position:absolute;left:1242px;top:412px;" width="16" height="17" viewBox="0 0 16 17"><g fill="none" stroke="#a0a0a0" stroke-width="1.2"><rect x="1" y="3.5" width="14" height="12.5" rx="1"/><line x1="1" y1="6" x2="15" y2="6" stroke-width="1.8"/></g><g fill="#a0a0a0"><rect x="3.5" y="1" width="1.6" height="4"/><rect x="10.9" y="1" width="1.6" height="4"/></g></svg>
<div class="t" style="left:860.50px;top:443.17px;font-size:11.6px;color:#6e6e6e;letter-spacing:0.750px;">Approximate Duration</div>
<div style="position:absolute;left:1020px;top:437px;width:240px;height:24px;box-sizing:border-box;border:1px solid #505050;background:#fff;"></div>
<div class="t" style="right:451.25px;top:443.17px;font-size:11.6px;color:#444;letter-spacing:0.750px;">8___ days</div>
<div class="t" style="left:862.00px;top:472.97px;font-size:11.6px;color:#8f8f8f;letter-spacing:0.134px;">CONTACT INFO</div>
<div style="position:absolute;left:969px;top:478px;width:291px;height:1px;background:#9a9a9a;"></div>
<div class="t" style="left:860.50px;top:501.17px;font-size:11.6px;color:#6e6e6e;letter-spacing:0.750px;">Contact Name*</div>
<div style="position:absolute;left:1020px;top:495px;width:240px;height:24px;box-sizing:border-box;border:1px solid #505050;background:#fff;"></div>
<svg style="position:absolute;left:987.5px;top:494.5px;" width="25" height="25" viewBox="0 0 25 25"><circle cx="12.5" cy="12.5" r="11.6" fill="#fff" stroke="#9a9a9a" stroke-width="1.1"/><g fill="#8f8f8f"><circle cx="7" cy="12.5" r="1.9"/><circle cx="12.5" cy="12.5" r="1.9"/><circle cx="18" cy="12.5" r="1.9"/></g></svg>
<div class="t" style="left:1022.00px;top:501.17px;font-size:11.6px;color:#3c3c3c;letter-spacing:0.750px;">James Smith</div>
<div class="t" style="left:860.50px;top:530.17px;font-size:11.6px;color:#6e6e6e;letter-spacing:0.750px;">Phone (Day) / Extension</div>
<div style="position:absolute;left:1020px;top:524px;width:120px;height:24px;box-sizing:border-box;border:1px solid #505050;background:#fff;"></div>
<div style="position:absolute;left:1148px;top:524px;width:112px;height:24px;box-sizing:border-box;border:1px solid #505050;background:#fff;"></div>
<div class="t" style="left:1022.00px;top:530.17px;font-size:11.6px;color:#3c3c3c;letter-spacing:0.750px;">888-888-8888</div>
<div class="t" style="left:860.50px;top:559.17px;font-size:11.6px;color:#6e6e6e;letter-spacing:0.750px;">Cell</div>
<div style="position:absolute;left:1020px;top:553px;width:240px;height:24px;box-sizing:border-box;border:1px solid #505050;background:#fff;"></div>
<div class="t" style="left:1022.00px;top:559.17px;font-size:11.6px;color:#3c3c3c;letter-spacing:0.750px;">888-888-8888</div>
<div class="t" style="left:860.50px;top:588.17px;font-size:11.6px;color:#6e6e6e;letter-spacing:0.750px;">Phone (Night) / Extensi...</div>
<div style="position:absolute;left:1020px;top:582px;width:120px;height:24px;box-sizing:border-box;border:1px solid #505050;background:#fff;"></div>
<div style="position:absolute;left:1148px;top:582px;width:112px;height:24px;box-sizing:border-box;border:1px solid #505050;background:#fff;"></div>
<div class="t" style="left:1022.00px;top:588.17px;font-size:11.6px;color:#3c3c3c;letter-spacing:0.750px;">888-888-8888</div>
<div class="t" style="left:860.50px;top:617.17px;font-size:11.6px;color:#6e6e6e;letter-spacing:0.750px;">Email</div>
<div style="position:absolute;left:1020px;top:611px;width:240px;height:24px;box-sizing:border-box;border:1px solid #505050;background:#fff;"></div>
<div class="t" style="left:1022.00px;top:617.17px;font-size:11.6px;color:#3c3c3c;letter-spacing:0.750px;">jamessmith@ACME.com</div>
<!--IMAGES-->
<svg style="position:absolute;left:1291px;top:148px;" width="100" height="104" viewBox="0 0 100 104"><defs><filter id="bl0" x="0" y="0" width="1" height="1"><feGaussianBlur stdDeviation="0.55"/></filter><clipPath id="cp0"><rect width="100" height="104"/></clipPath></defs><g clip-path="url(#cp0)"><g filter="url(#bl0)"><defs><linearGradient id="fl1" x1="0" y1="0" x2="0" y2="1"><stop offset="0" stop-color="#c08890"/><stop offset="1" stop-color="#dcaab0"/></linearGradient>
<linearGradient id="bd1" x1="0" y1="0" x2="0" y2="1"><stop offset="0" stop-color="#f3c41e"/><stop offset="1" stop-color="#e3ab10"/></linearGradient>
<linearGradient id="wl1" x1="0" y1="0" x2="1" y2="0"><stop offset="0" stop-color="#c4beb2"/><stop offset="0.25" stop-color="#d8d2c7"/><stop offset="1" stop-color="#ebe5db"/></linearGradient></defs>
<rect width="100" height="104" fill="url(#wl1)"/>
<rect y="82" width="100" height="22" fill="url(#fl1)"/>
<path d="M12 0 H98 L98 8 L89 17 L82 30 L75 44 L15 44 L13 20 Z" fill="url(#bd1)"/>
<g stroke="#b88a06" stroke-width="1.2" fill="none"><path d="M13 6 H97"/><path d="M13.5 13 H90"/><path d="M14 20 H86"/><path d="M14.5 27 H83"/><path d="M15 34 H79"/><path d="M15 41 H76"/><path d="M46 0 L41 45"/><path d="M66 0 L58 45"/><path d="M28 26 L38 45"/><path d="M60 20 L52 40"/></g>
<g stroke="#fde27a" stroke-width="1" fill="none" opacity="0.8"><path d="M16 9.5 H42"/><path d="M16 16.5 H40"/><path d="M17 23.5 H38"/></g>
<rect x="36" y="42" width="27" height="34" fill="#e2ae16"/><rect x="41" y="48" width="15" height="10" fill="#8e6d10"/><rect x="36" y="60" width="27" height="14" rx="4" fill="#edb91c"/>
<rect x="9" y="43" width="14" height="51" rx="5" fill="#1c1c1c"/><rect x="22" y="43" width="14" height="51" rx="5" fill="#262626"/>
<rect x="60" y="46" width="14" height="44" rx="5" fill="#1f1f1f"/><rect x="73" y="46" width="15" height="43" rx="5" fill="#292929"/>
<rect x="52" y="76" width="10" height="10" fill="#3a3a3a"/>
<path d="M69 67 C71 66 76 66 77 70 L77 82 L75 83 L75 102 L71 102 L70 83 L68 82 Z" fill="#f2f2f2"/><circle cx="72.8" cy="65.5" r="2" fill="#d19a62"/></g></g></svg>
<svg style="position:absolute;left:1391px;top:148px;" width="100" height="104" viewBox="0 0 100 104"><defs><filter id="bl1" x="0" y="0" width="1" height="1"><feGaussianBlur stdDeviation="0.55"/></filter><clipPath id="cp1"><rect width="100" height="104"/></clipPath></defs><g clip-path="url(#cp1)"><g filter="url(#bl1)"><defs><linearGradient id="sk2" x1="0" y1="0" x2="0" y2="1"><stop offset="0" stop-color="#1658bd"/><stop offset="0.55" stop-color="#3f88d8"/><stop offset="1" stop-color="#a9cdea"/></linearGradient></defs>
<rect width="100" height="104" fill="url(#sk2)"/>
<path d="M70 20 L82 29 L94 46 L88 57 L75 60 L66 36 Z" fill="#e2ad1e"/>
<g stroke="#b88a10" stroke-width="0.8"><path d="M77 30 L80 57"/><path d="M82 34 L84 56"/><path d="M87 40 L88 55"/></g>
<path d="M5 24 L16 19.5 L45 16 L62 15.5 L74 21 L75 27 L40 30 L8 29 Z" fill="#f0bd24"/>
<path d="M15 21 L44 18 L44 22 L15 24.5 Z" fill="#1e1e1e"/>
<rect x="11" y="28" width="64" height="56" fill="#d9a516"/>
<rect x="22" y="31" width="48" height="20" fill="#3d3522"/>
<g stroke="#d9a516" stroke-width="1"><path d="M22 38 H70"/><path d="M30 31 V51"/><path d="M40 31 V51"/></g>
<rect x="9" y="40" width="12" height="12" fill="#3d5a86"/>
<rect x="23" y="52" width="22" height="32" fill="#33302a"/>
<path d="M24 82 L44 56" stroke="#c9961a" stroke-width="2.2"/>
<rect x="46" y="52" width="18" height="18" fill="#e2b020"/>
<rect x="14" y="80" width="38" height="7" fill="#e8b41c"/>
<rect x="12" y="70" width="26" height="34" rx="9" fill="#1d1d1d"/><rect x="38" y="86" width="20" height="18" rx="6" fill="#242424"/>
<rect x="78" y="62" width="16" height="40" rx="7" fill="#1c1c1c"/><ellipse cx="87" cy="82" rx="3.8" ry="9.5" fill="#e4af1a"/>
<rect x="57" y="60" width="23" height="44" rx="10" fill="#202020"/><ellipse cx="68.5" cy="81" rx="5.5" ry="11" fill="#e8b31c"/><ellipse cx="68.5" cy="81" rx="2.2" ry="4.5" fill="#a07c14"/>
<path d="M68 84 L73 83 L75 104 L69 104 Z" fill="#a9d68e"/></g></g></svg>
<svg style="position:absolute;left:1491px;top:148px;" width="100" height="104" viewBox="0 0 100 104"><defs><filter id="bl2" x="0" y="0" width="1" height="1"><feGaussianBlur stdDeviation="0.55"/></filter><clipPath id="cp2"><rect width="100" height="104"/></clipPath></defs><g clip-path="url(#cp2)"><g filter="url(#bl2)"><defs><radialGradient id="sh3" cx="50%" cy="50%" r="50%"><stop offset="0" stop-color="#c4c4c4"/><stop offset="1" stop-color="#ffffff"/></radialGradient></defs>
<rect width="100" height="104" fill="#fff"/>
<ellipse cx="52" cy="86" rx="46" ry="11" fill="url(#sh3)"/>
<path d="M6 22 L16 13 L44 9 L48 5 L75 6 L94 9 L93 14 L75 15 L60 30 L40 45 L24 40 L8 27 Z" fill="#e2ae2c"/>
<path d="M48 5 L75 6 L94 9 L78 14 L52 16 Z" fill="#eac873"/>
<g stroke="#b98c1c" stroke-width="0.9"><path d="M14 18 L22 37"/><path d="M22 15 L29 40"/><path d="M30 13 L35 42"/></g>
<path d="M35 16 L90 14 L90 70 L72 78 L40 74 Z" fill="#d6a226"/>
<rect x="64" y="17" width="24" height="22" fill="#231f16"/>
<rect x="73" y="41" width="15" height="30" fill="#2e2a20"/>
<path d="M42 24 H62 V44 H42Z" fill="#a67c1c"/>
<rect x="52" y="30" width="4" height="8" fill="#c83030"/>
<rect x="14" y="40" width="26" height="41" rx="11" fill="#272727"/><ellipse cx="22.5" cy="61" rx="6" ry="10" fill="#d9a52a"/><ellipse cx="22.5" cy="61" rx="2.5" ry="5" fill="#b58520"/>
<rect x="41" y="48" width="20" height="43" rx="9.5" fill="#282828"/><ellipse cx="49" cy="71" rx="4.5" ry="11" fill="#d9a52a"/>
<rect x="71" y="72" width="2" height="14" fill="#555"/><rect x="86" y="55" width="2.5" height="22" fill="#777"/></g></g></svg>
<svg style="position:absolute;left:1591px;top:148px;" width="100" height="104" viewBox="0 0 100 104"><defs><filter id="bl3" x="0" y="0" width="1" height="1"><feGaussianBlur stdDeviation="0.55"/></filter><clipPath id="cp3"><rect width="100" height="104"/></clipPath></defs><g clip-path="url(#cp3)"><g filter="url(#bl3)"><rect width="100" height="104" fill="#030303"/>
<rect x="3" y="30" width="2" height="42" fill="#c07ad0"/>
<path d="M10 26 L18 21 L58 19 L63 30 L60 38 L9 40 Z" fill="#e4e4e4"/>
<g stroke="#aaa" stroke-width="0.7"><path d="M16 24 L20 38"/><path d="M24 23 L28 37"/><path d="M32 22 L36 37"/><path d="M40 21 L44 37"/><path d="M48 21 L52 37"/></g>
<path d="M9 36 L60 37 L63 48 L9 45 Z" fill="#f0e020"/>
<g stroke="#c9b810" stroke-width="0.8"><path d="M16 37 L14 45"/><path d="M24 37 L22 46"/><path d="M32 37 L30 46"/><path d="M40 37 L38 47"/><path d="M48 37 L46 47"/></g>
<path d="M14 45 L62 48 L63 62 L16 60 Z" fill="#d8d2b4"/>
<rect x="28" y="50" width="14" height="8" fill="#f0f0f0"/>
<path d="M22 58 L55 60 L56 68 L24 66 Z" fill="#f0de30"/>
<rect x="4" y="54" width="17" height="15" fill="#eeeeee"/><rect x="5" y="59" width="11" height="2" fill="#3caa3a"/><rect x="5" y="62" width="11" height="2" fill="#dd3344"/>
<rect x="18" y="50" width="3" height="18" fill="#222"/><rect x="23" y="50" width="2" height="18" fill="#222"/>
<rect x="46" y="2" width="26" height="4" fill="#f2d31a"/>
<rect x="51" y="6" width="5" height="12" fill="#ef8f6a"/>
<path d="M66 9 C61 10 60 18 65 20" stroke="#e3342c" stroke-width="2.5" fill="none"/>
<path d="M62 18 H90 L88 40 L64 42 Z" fill="#f0963a"/>
<g fill="#2e55c6"><circle cx="69" cy="13" r="4.5"/><circle cx="77" cy="13" r="4.5"/><circle cx="85" cy="13" r="4.5"/><circle cx="92" cy="13" r="4"/></g>
<path d="M60 40 L90 36 L96 46 L92 78 L66 84 L56 70 Z" fill="#9cc6e8"/>
<path d="M66 46 L82 42 L84 56 L70 60 Z" fill="#f2f2f2"/>
<circle cx="80" cy="64" r="8" fill="#66c24a"/><circle cx="80" cy="64" r="4" fill="#eeeeee"/>
<path d="M62 54 L76 52 L74 74 L60 72 Z" fill="#f0c02a"/>
<rect x="46" y="72" width="16" height="20" fill="#2f3fb8"/><g fill="#eee"><rect x="49" y="76" width="1.6" height="13"/><rect x="53" y="76" width="1.6" height="13"/><rect x="57" y="76" width="1.6" height="13"/></g>
<path d="M62 80 L92 72 L95 88 L70 102 L60 96 Z" fill="#f0b4e0"/>
<path d="M68 74 L84 70 L85 80 L70 84 Z" fill="#ef7a2a"/></g></g></svg>
<svg style="position:absolute;left:0;top:0" width="1709" height="771" viewBox="0 0 1709 771"><line x1="160.9" y1="43.3" x2="209.7" y2="9.3" stroke="#6cb43c" stroke-width="1.1"/><line x1="160.9" y1="88" x2="416.8" y2="7.2" stroke="#6cb43c" stroke-width="1.1"/><line x1="160.9" y1="134" x2="415.8" y2="45.1" stroke="#6cb43c" stroke-width="1.1"/><line x1="160.9" y1="179.7" x2="407.5" y2="86.3" stroke="#6cb43c" stroke-width="1.1"/><line x1="160.9" y1="225.4" x2="422.5" y2="138.1" stroke="#6cb43c" stroke-width="1.1"/><circle cx="160.9" cy="43.3" r="13.8" fill="#6cb43c"/><text x="161.1" y="48.099999999999994" text-anchor="middle" font-family="Liberation Sans" font-weight="bold" font-size="13.5" fill="#fff">1</text><circle cx="160.9" cy="88" r="13.8" fill="#6cb43c"/><text x="161.1" y="92.8" text-anchor="middle" font-family="Liberation Sans" font-weight="bold" font-size="13.5" fill="#fff">2</text><circle cx="160.9" cy="134" r="13.8" fill="#6cb43c"/><text x="161.1" y="138.8" text-anchor="middle" font-family="Liberation Sans" font-weight="bold" font-size="13.5" fill="#fff">3</text><circle cx="160.9" cy="179.7" r="13.8" fill="#6cb43c"/><text x="161.1" y="184.5" text-anchor="middle" font-family="Liberation Sans" font-weight="bold" font-size="13.5" fill="#fff">4</text><circle cx="160.9" cy="225.4" r="13.8" fill="#6cb43c"/><text x="161.1" y="230.20000000000002" text-anchor="middle" font-family="Liberation Sans" font-weight="bold" font-size="13.5" fill="#fff">5</text></svg>
</body></html>
